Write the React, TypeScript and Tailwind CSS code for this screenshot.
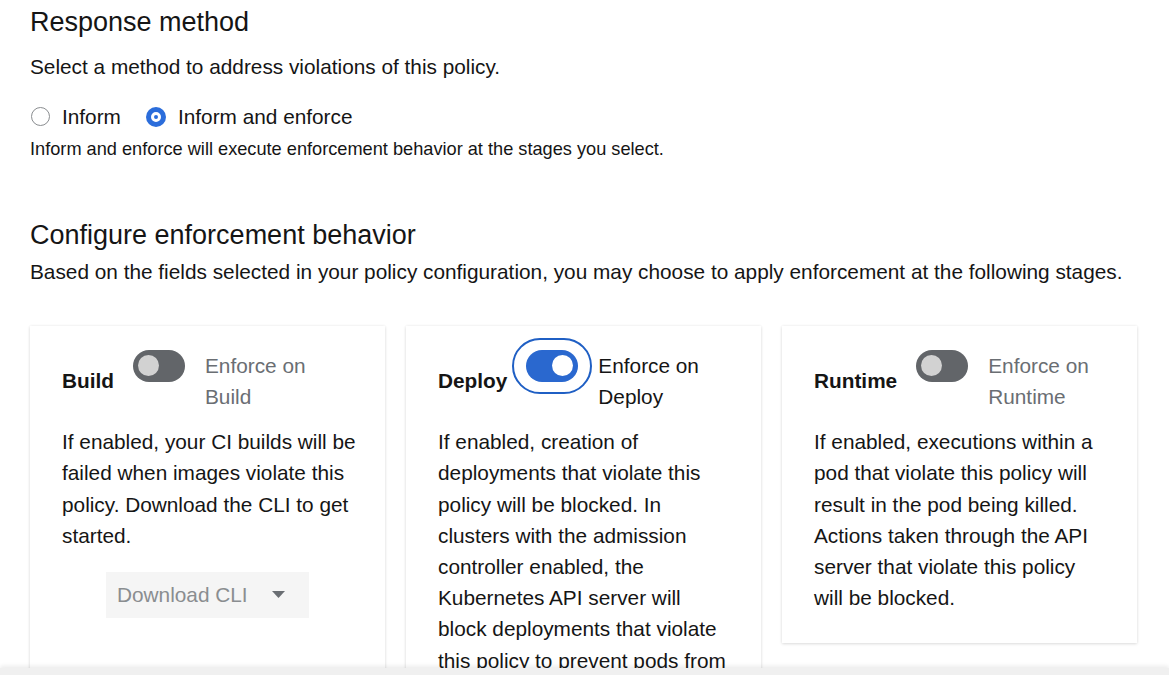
import React from "react";

type Stage = {
  title: string;
  label: string;
  on: boolean;
  text: string;
  cli?: boolean;
  stretch?: boolean;
};

const stages: Stage[] = [
  {
    title: "Build",
    label: "Enforce on Build",
    on: false,
    text: "If enabled, your CI builds will be failed when images violate this policy. Download the CLI to get started.",
    cli: true,
    stretch: true,
  },
  {
    title: "Deploy",
    label: "Enforce on Deploy",
    on: true,
    text: "If enabled, creation of deployments that violate this policy will be blocked. In clusters with the admission controller enabled, the Kubernetes API server will block deployments that violate this policy to prevent pods from being scheduled.",
    stretch: true,
  },
  {
    title: "Runtime",
    label: "Enforce on Runtime",
    on: false,
    text: "If enabled, executions within a pod that violate this policy will result in the pod being killed. Actions taken through the API server that violate this policy will be blocked.",
  },
];

function Toggle({ on }: { on: boolean }) {
  if (on) {
    return (
      <div className="relative w-[52px] h-[32px] shrink-0">
        <div className="absolute -inset-x-[14px] -inset-y-[12px] rounded-full border-2 border-[#1f5fc4]" />
        <div className="w-[52px] h-[32px] rounded-full bg-[#2a68cf] flex items-center justify-end pr-[5px]">
          <div className="w-[21px] h-[21px] rounded-full bg-white" />
        </div>
      </div>
    );
  }
  return (
    <div className="w-[52px] h-[32px] shrink-0 rounded-full bg-[#626569] flex items-center pl-[5px]">
      <div className="w-[21px] h-[21px] rounded-full bg-[#d2d2d2]" />
    </div>
  );
}

function StageCard({ s }: { s: Stage }) {
  return (
    <div
      className={`bg-white shadow-[0_1px_3px_rgba(3,3,3,0.12),0_0_3px_rgba(3,3,3,0.06)] pl-[32px] pt-[24px] pb-[30px] ${
        s.cli ? "pr-[24px]" : "pr-[32px]"
      } ${s.stretch ? "" : "self-start"}`}
    >
      <div className="flex items-center gap-[19px]">
        <div className="font-bold text-[#151515]">{s.title}</div>
        <div className="flex items-start gap-[20px]">
          <Toggle on={s.on} />
          <div className={`w-[110px] ${s.on ? "text-[#151515]" : "text-[#6a6e73]"}`}>{s.label}</div>
        </div>
      </div>
      <p className="mt-[14px] text-[#151515]">{s.text}</p>
      {s.cli && (
        <div className="flex justify-center mt-[21px] pr-[8px]">
          <div className="w-[203px] h-[46px] bg-[#f5f5f5] flex items-center justify-between pl-[11px] pr-[24px] text-[#8a8d90]">
            <span>Download CLI</span>
            <svg width="13" height="8" viewBox="0 0 13 8">
              <path d="M0 0 L13 0 L6.5 7 Z" fill="#6a6e73" />
            </svg>
          </div>
        </div>
      )}
    </div>
  );
}

export default function App() {
  return (
    <div
      className="h-screen flex flex-col bg-white overflow-hidden text-[20.8px] leading-[1.5] text-[#151515]"
      style={{ fontFamily: '"Liberation Sans", Arial, sans-serif' }}
    >
      <div className="flex-1 overflow-hidden px-[30px] pt-[5px]">
        <h2 className="text-[27px] leading-[34px]">Response method</h2>
        <p className="mt-[12px]">Select a method to address violations of this policy.</p>
        <div className="flex items-center mt-[19px]">
          <label className="flex items-center gap-[12px] pl-[1px]">
            <span className="w-[19px] h-[19px] rounded-full border border-[#8a8d90] bg-white" />
            <span>Inform</span>
          </label>
          <label className="flex items-center gap-[12px] ml-[25px]">
            <span className="w-[20px] h-[20px] rounded-full bg-[#2b6ddb] flex items-center justify-center">
              <span className="w-[10px] h-[10px] rounded-full border-[3px] border-white" />
            </span>
            <span>Inform and enforce</span>
          </label>
        </div>
        <p className="mt-[4px] text-[18.2px] leading-[27.3px]">
          Inform and enforce will execute enforcement behavior at the stages you select.
        </p>
        <h2 className="text-[27px] leading-[34px] mt-[54px]">Configure enforcement behavior</h2>
        <p className="mt-[4px]">
          Based on the fields selected in your policy configuration, you may choose to apply enforcement at the
          following stages.
        </p>
        <div className="grid grid-cols-[355px_355px_355px] gap-[21px] mt-[39px] min-h-[420px]">
          {stages.map((s) => (
            <StageCard key={s.title} s={s} />
          ))}
        </div>
      </div>
      <div className="h-[7px] bg-[#f0f0f0] shadow-[0_-2px_4px_rgba(3,3,3,0.08)] relative" />
    </div>
  );
}
